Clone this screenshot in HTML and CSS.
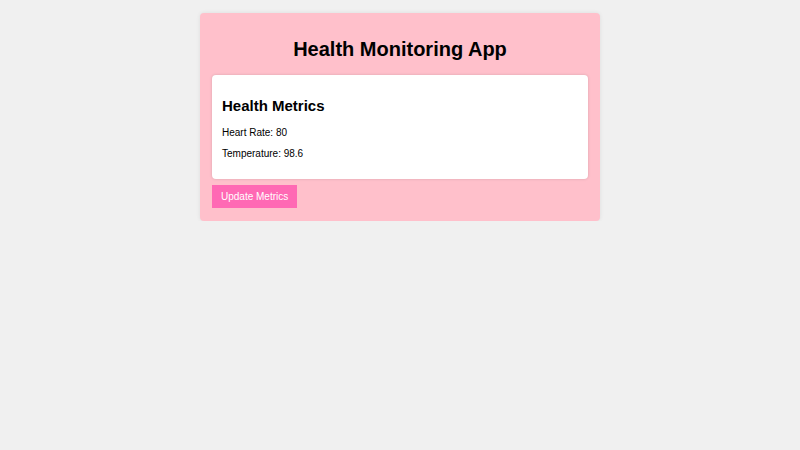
FILE: index.html
```html
<!DOCTYPE html>
<html lang="en">

<head>
    <meta charset="UTF-8">
    <meta name="viewport" content="width=device-width, initial-scale=1.0">
    <title>Health Monitoring App</title>

    <link rel="stylesheet" href="styles.css">
</head>

<body>
    <div class="app">
        <h1 class="title">Health Monitoring App</h1>
        <div class="metrics">
            <h2>Health Metrics</h2>
            <p>Heart Rate: 80</p>
            <p>Temperature: 98.6</p>
        </div>
        <button class="update-btn">Update Metrics</button>
    </div>
</body>

</html>
```

FILE: styles.css
```css
body {
    margin: 0;
    padding-top: 13px;
    background: #f0f0f0;
    font-family: "Liberation Sans", Arial, sans-serif;
}

.app {
    width: 376px;
    margin: 0 auto;
    padding: 12px 12px 13px;
    background: #ffc0cb;
    border-radius: 4px;
    box-shadow: 0 0 4px rgba(0, 0, 0, .08);
}

.title {
    margin: 13px 0 14px;
    font-size: 20px;
    text-align: center;
}

.metrics {
    padding: 10px;
    background: #fff;
    border-radius: 4px;
    box-shadow: 0 0 3px rgba(0, 0, 0, .15);
}

.metrics h2 {
    margin: 12px 0 13px;
    font-size: 15px;
}

.metrics p {
    margin: 0 0 10px;
    font-size: 10px;
}

.update-btn {
    display: block;
    margin-top: 6px;
    padding: 6px 9px;
    border: none;
    background: #ff69b4;
    color: #fff;
    font-family: inherit;
    font-size: 10px;
}
```
